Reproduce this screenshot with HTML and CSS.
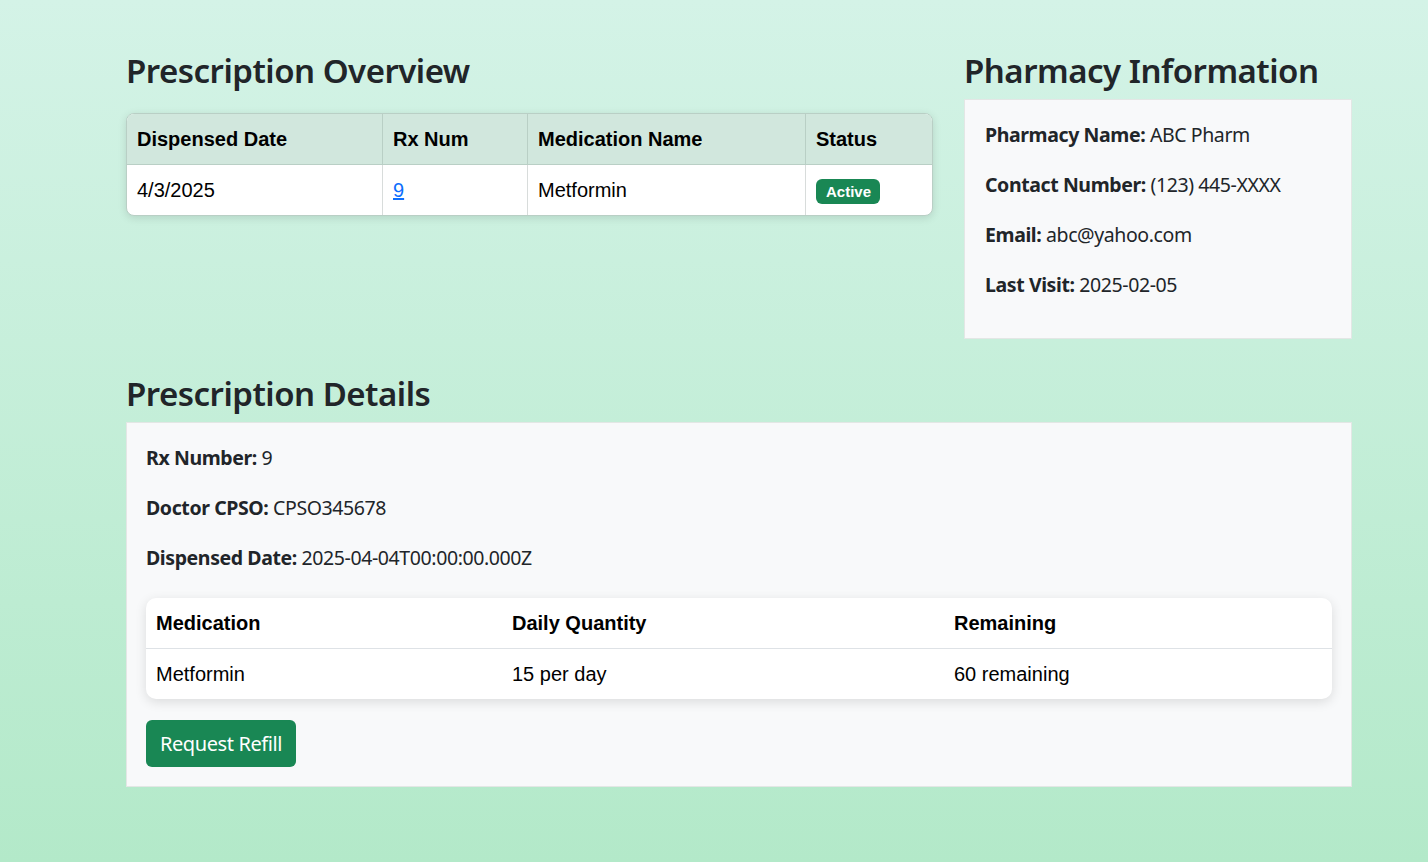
FILE: index.html
```html
<!DOCTYPE html>
<html lang="en">
<head>
<meta charset="utf-8">
<title>Prescription Overview</title>
<link rel="stylesheet" href="styles.css">
</head>
<body>
<main class="page">
  <div class="top-row">
    <section class="overview">
      <h2 class="title title-overview">Prescription Overview</h2>
      <table class="rx-table">
        <thead>
          <tr>
            <th class="c1">Dispensed Date</th>
            <th class="c2">Rx Num</th>
            <th class="c3">Medication Name</th>
            <th class="c4">Status</th>
          </tr>
        </thead>
        <tbody>
          <tr>
            <td>4/3/2025</td>
            <td><a href="#" class="rx-link">9</a></td>
            <td>Metformin</td>
            <td><span class="badge">Active</span></td>
          </tr>
        </tbody>
      </table>
    </section>
    <section class="pharmacy">
      <h2 class="title">Pharmacy Information</h2>
      <div class="card">
        <p><strong>Pharmacy Name:</strong> ABC Pharm</p>
        <p><strong>Contact Number:</strong> (123) 445-XXXX</p>
        <p><strong>Email:</strong> abc@yahoo.com</p>
        <p><strong>Last Visit:</strong> 2025-02-05</p>
      </div>
    </section>
  </div>
  <section class="details">
    <h2 class="title">Prescription Details</h2>
    <div class="card details-card">
      <p><strong>Rx Number:</strong> 9</p>
      <p><strong>Doctor CPSO:</strong> CPSO345678</p>
      <p><strong>Dispensed Date:</strong> 2025-04-04T00:00:00.000Z</p>
      <table class="med-table">
        <thead>
          <tr>
            <th class="m1">Medication</th>
            <th class="m2">Daily Quantity</th>
            <th class="m3">Remaining</th>
          </tr>
        </thead>
        <tbody>
          <tr>
            <td>Metformin</td>
            <td>15 per day</td>
            <td>60 remaining</td>
          </tr>
        </tbody>
      </table>
      <button class="btn" type="button">Request Refill</button>
    </div>
  </section>
</main>
</body>
</html>
```
FILE: styles.css
```css
* { box-sizing: border-box; }
html, body { margin: 0; padding: 0; }
body {
  min-height: 862px;
  background: linear-gradient(180deg, #d4f3e7 0%, #b3e9c9 100%);
  font-family: "Noto Sans", "Open Sans", sans-serif;
  color: #212529;
}
.page {
  width: 1226px;
  margin-left: 126px;
  padding-top: 52px;
}
.top-row {
  display: grid;
  grid-template-columns: 807px 388px;
  column-gap: 31px;
  align-items: start;
}
.title {
  margin: 0 0 9px 0;
  font-size: 33px;
  line-height: 38px;
  font-weight: 600;
  color: #212529;
  letter-spacing: -0.5px;
}
.title-overview { margin-bottom: 23px; }

.rx-table {
  width: 807px;
  border-collapse: separate;
  border-spacing: 0;
  font-family: "Liberation Sans", Arial, sans-serif;
  font-size: 20px;
  line-height: 30px;
  color: #000;
  background: #fff;
  border: 1px solid #b9cfc5;
  border-radius: 8px;
  overflow: hidden;
  box-shadow: 0 2px 8px rgba(0, 0, 0, 0.12);
}
.rx-table th, .rx-table td {
  text-align: left;
  padding: 10px 10px;
  border-left: 1px solid #d8dcdb;
}
.rx-table th:first-child, .rx-table td:first-child { border-left: none; }
.rx-table th {
  background: #d1e7dd;
  font-weight: 700;
  border-bottom: 1px solid #b9cfc5;
  border-left-color: #b9cfc5;
}
.rx-table .c1 { width: 255px; }
.rx-table .c2 { width: 145px; }
.rx-table .c3 { width: 278px; }
.rx-link { color: #0d6efd; text-decoration: underline; }
.badge {
  display: inline-block;
  background: #198754;
  color: #fff;
  font-size: 15px;
  font-weight: 700;
  line-height: 15px;
  padding: 5px 9px 5px 10px;
  border-radius: 6px;
  vertical-align: 0;
}

.card {
  background: #f8f9fa;
  border: 1px solid #e3e7e5;
  padding: 19px 20px;
}
.card p {
  margin: 0 0 20px 0;
  font-size: 19.5px;
  line-height: 30px;
  letter-spacing: -0.4px;
  transform: translateY(1px);
}
.card p strong { font-weight: 700; }

.details { margin-top: 36px; }
.details-card { padding: 19px 19px 19px 19px; }
.med-table {
  width: 100%;
  margin-top: 26px;
  border-collapse: separate;
  border-spacing: 0;
  background: #fff;
  border-radius: 10px;
  box-shadow: 0 3px 12px rgba(0, 0, 0, 0.12);
  font-family: "Liberation Sans", Arial, sans-serif;
  font-size: 20px;
  line-height: 30px;
  color: #000;
}
.med-table th, .med-table td {
  text-align: left;
  padding: 10px 10px;
}
.med-table th {
  font-weight: 700;
  border-bottom: 1px solid #dee2e6;
}
.med-table .m1 { width: 356px; }
.med-table .m2 { width: 442px; }
.btn {
  display: block;
  margin-top: 21px;
  width: 150px;
  height: 47px;
  background: #198754;
  color: #fff;
  border: none;
  border-radius: 6px;
  font-family: "Noto Sans", "Open Sans", sans-serif;
  font-size: 20px;
  line-height: 30px;
  padding: 0;
  letter-spacing: -0.4px;
}
```
